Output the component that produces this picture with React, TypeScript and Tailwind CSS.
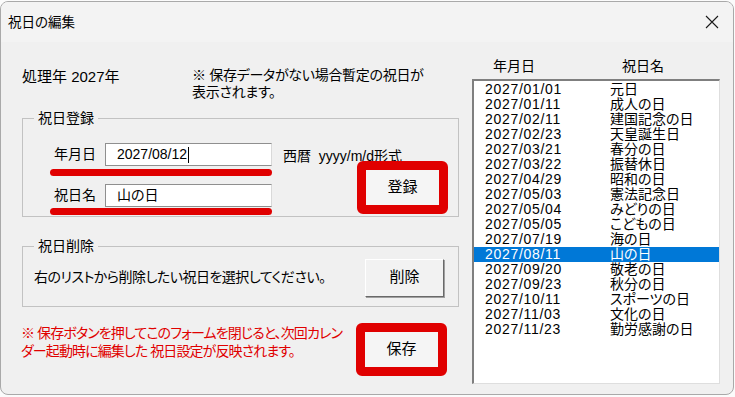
import React from "react";

const font = "font-['Liberation_Sans','Noto_Sans_CJK_JP',sans-serif] [font-feature-settings:'palt']";

const holidays = [
  ["2027/01/01", "元日"],
  ["2027/01/11", "成人の日"],
  ["2027/02/11", "建国記念の日"],
  ["2027/02/23", "天皇誕生日"],
  ["2027/03/21", "春分の日"],
  ["2027/03/22", "振替休日"],
  ["2027/04/29", "昭和の日"],
  ["2027/05/03", "憲法記念日"],
  ["2027/05/04", "みどりの日"],
  ["2027/05/05", "こどもの日"],
  ["2027/07/19", "海の日"],
  ["2027/08/11", "山の日"],
  ["2027/09/20", "敬老の日"],
  ["2027/09/23", "秋分の日"],
  ["2027/10/11", "スポーツの日"],
  ["2027/11/03", "文化の日"],
  ["2027/11/23", "勤労感謝の日"],
];

function RedBox({ label }: { label: string }) {
  return (
    <div className="w-[91px] h-[53px] border-[9px] border-[#e00000] rounded-[6px] bg-[#f5f5f5] flex items-center justify-center text-[15px] text-black">
      {label}
    </div>
  );
}

function Field({ label, value, caret }: { label: string; value: string; caret?: boolean }) {
  return (
    <div className="flex items-center h-[23px]">
      <div className="w-[55px] pr-[9px] text-right text-[14px] leading-[17px]">{label}</div>
      <div className="w-[167px] h-[23px] bg-white border border-[#8f8f8f] border-r-[#d9d9d9] flex items-center pl-[11px] text-[14px] leading-[17px]">
        <span>{value}</span>
        {caret && <span className="w-px h-[16px] bg-black ml-[1px]" />}
      </div>
    </div>
  );
}

function Group({ title, className, children }: { title: string; className: string; children: React.ReactNode }) {
  return (
    <div className={"relative border border-[#c2c2c2] " + className}>
      <span className="absolute left-[11px] -top-[9px] px-[4px] bg-[#f0f0f0] text-[14px] leading-[17px]">{title}</span>
      {children}
    </div>
  );
}

export default function App() {
  return (
    <div className={"w-[735px] h-[397px] bg-[#fbfbfb] pt-px " + font}>
      <div className="w-[734px] h-[394px] rounded-[8px] border border-[#a9a9a9] bg-[#f0f0f0] flex flex-col overflow-hidden text-black">
        {/* title bar */}
        <div className="h-[40px] flex items-center justify-between pl-[7px] pr-[14px] bg-[#f3f3f3]">
          <span className="text-[13.5px] leading-[17px]">祝日の編集</span>
          <svg width="14" height="14" viewBox="0 0 14 14" className="text-[#1a1a1a]">
            <path d="M1 1 L13 13 M13 1 L1 13" stroke="currentColor" strokeWidth="1.1" />
          </svg>
        </div>

        <div className="flex flex-1">
          {/* left */}
          <div className="w-[458px] pl-[21px]">
            <div className="flex items-start pt-[25px]">
              <div className="w-[170px] mt-px text-[15px] leading-[18px]">処理年 2027年</div>
              <div className="text-[14px] leading-[17px] tracking-[-0.3px]">
                ※ 保存データがない場合暫定の祝日が
                <br />
                表示されます。
              </div>
            </div>

            <Group title="祝日登録" className="mt-[17px] h-[99px] w-[437px] flex pt-[24px] pl-[27px]">
              <div className="w-[222px] flex flex-col">
                <Field label="年月日" value="2027/08/12" caret />
                <div className="mt-[3px] h-[7px] w-[222px] rounded-full bg-[#e00000]" />
                <div className="mt-[8px]">
                  <Field label="祝日名" value="山の日" />
                </div>
                <div className="mt-px h-[7px] w-[222px] rounded-full bg-[#e00000]" />
              </div>
              <div className="ml-[11px] flex flex-col">
                <div className="mt-[5px] text-[14px] leading-[16px] whitespace-nowrap">西暦&nbsp;&nbsp;yyyy/m/d形式</div>
                <div className="-mt-[3px] ml-[74px]">
                  <RedBox label="登録" />
                </div>
              </div>
            </Group>

            <Group title="祝日削除" className="mt-[29px] h-[61px] w-[437px] flex items-center justify-between pl-[11px] pr-[14px] pt-[2px]">
              <span className="text-[14px] leading-[17px] tracking-[-0.5px]">右のリストから削除したい祝日を選択してください。</span>
              <div className="w-[79px] h-[38px] bg-[#f2f2f2] border border-white border-r-[#696969] border-b-[#696969] shadow-[1px_1px_0_#a0a0a0] flex items-center justify-center text-[15px]">
                削除
              </div>
            </Group>

            <div className="mt-[16px] flex items-start">
              <div className="w-[335px] -ml-px pt-[1px] text-[14px] leading-[18px] text-[#e00000] whitespace-nowrap tracking-[-0.9px]">
                ※ 保存ボタンを押してこのフォームを閉じると、次回カレン
                <br />
                ダー起動時に編集した 祝日設定が反映されます。
              </div>
              <RedBox label="保存" />
            </div>
          </div>

          {/* right */}
          <div className="ml-[13px] flex flex-col">
            <div className="flex pt-[16px] text-[14px] leading-[17px]">
              <span className="pl-[21px] w-[150px]">年月日</span>
              <span>祝日名</span>
            </div>
            <div className="mt-[4px] w-[248px] h-[305px] bg-white border-t-2 border-l-2 border-[#7f7f7f] border-r border-b border-r-[#dedede] border-b-[#dedede] pt-px">
              {holidays.map(([d, n]) => {
                const sel = d === "2027/08/11";
                return (
                  <div key={d} className={"flex h-[15px] items-center text-[14px] leading-[15px] " + (sel ? "bg-[#0078d7] text-white" : "")}>
                    <span className="pl-[11px] w-[136px] tracking-[0.7px]">{d}</span>
                    <span>{n}</span>
                  </div>
                );
              })}
            </div>
          </div>
        </div>
      </div>
    </div>
  );
}
